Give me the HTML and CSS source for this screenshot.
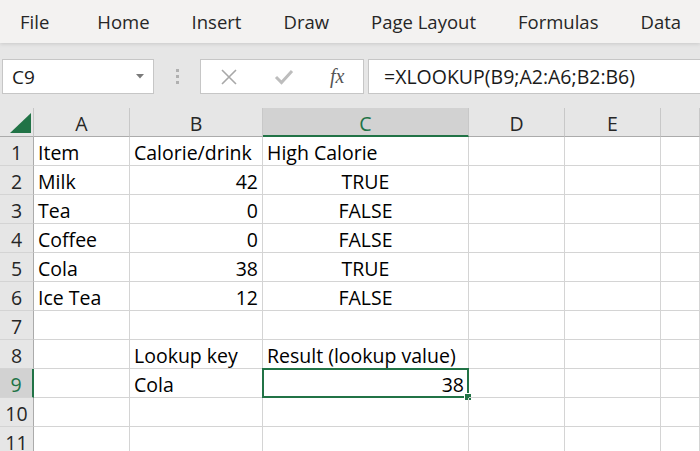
FILE: index.html
```html
<!DOCTYPE html>
<html>
<head>
<meta charset="utf-8">
<link rel="stylesheet" href="styles.css">
</head>
<body>
<div class="app">
  <nav class="menubar">
    <span class="first">File</span><span>Home</span><span>Insert</span><span>Draw</span><span>Page Layout</span><span>Formulas</span><span>Data</span>
  </nav>
  <div class="formulabar">
    <div class="namebox"><span>C9</span><svg class="caret" width="8" height="5" viewBox="0 0 8 5"><polygon points="0,0 8,0 4,4.5" fill="#7a7a7a"/></svg></div>
    <div class="dots"><i></i><i></i><i></i></div>
    <div class="fxbox">
      <svg class="ico" width="18" height="18" viewBox="0 0 18 18"><path d="M2 2 L16 16 M16 2 L2 16" stroke="#a8a8a8" stroke-width="1.6" fill="none"/></svg>
      <svg class="ico" width="20" height="18" viewBox="0 0 20 18"><path d="M2 9 L7.5 14.5 L18 3" stroke="#bdbdbd" stroke-width="3" fill="none"/></svg>
      <span class="fx">fx</span>
    </div>
    <div class="input"><span class="formula">=XLOOKUP(B9;A2:A6;B2:B6)</span></div>
  </div>
  <div class="sheet">
    <div class="corner"><svg width="34" height="29" viewBox="0 0 34 29"><polygon points="31,5 31,25 10,25" fill="#217346"/></svg></div>
    <div class="ch">A</div><div class="ch">B</div><div class="ch sel">C</div><div class="ch">D</div><div class="ch">E</div><div class="ch"></div>

    <div class="rh">1</div><div class="c">Item</div><div class="c">Calorie/drink</div><div class="c">High Calorie</div><div class="c"></div><div class="c"></div><div class="c"></div>
    <div class="rh">2</div><div class="c">Milk</div><div class="c num">42</div><div class="c mid">TRUE</div><div class="c"></div><div class="c"></div><div class="c"></div>
    <div class="rh">3</div><div class="c">Tea</div><div class="c num">0</div><div class="c mid">FALSE</div><div class="c"></div><div class="c"></div><div class="c"></div>
    <div class="rh">4</div><div class="c">Coffee</div><div class="c num">0</div><div class="c mid">FALSE</div><div class="c"></div><div class="c"></div><div class="c"></div>
    <div class="rh">5</div><div class="c">Cola</div><div class="c num">38</div><div class="c mid">TRUE</div><div class="c"></div><div class="c"></div><div class="c"></div>
    <div class="rh">6</div><div class="c">Ice Tea</div><div class="c num">12</div><div class="c mid">FALSE</div><div class="c"></div><div class="c"></div><div class="c"></div>
    <div class="rh">7</div><div class="c"></div><div class="c"></div><div class="c"></div><div class="c"></div><div class="c"></div><div class="c"></div>
    <div class="rh">8</div><div class="c"></div><div class="c">Lookup key</div><div class="c">Result (lookup value)</div><div class="c"></div><div class="c"></div><div class="c"></div>
    <div class="rh sel">9</div><div class="c"></div><div class="c">Cola</div><div class="c num active">38<span class="handle"></span></div><div class="c"></div><div class="c"></div><div class="c"></div>
    <div class="rh">10</div><div class="c"></div><div class="c"></div><div class="c"></div><div class="c"></div><div class="c"></div><div class="c"></div>
    <div class="rh">11</div><div class="c"></div><div class="c"></div><div class="c"></div><div class="c"></div><div class="c"></div><div class="c"></div>
  </div>
</div>
</body>
</html>
```

FILE: styles.css
```css
* { box-sizing: border-box; }
html, body { margin: 0; padding: 0; }
body {
  width: 700px;
  height: 451px;
  overflow: hidden;
  background: #ffffff;
  font-family: "Open Sans", "Noto Sans", sans-serif;
  color: #000;
}
.app { width: 700px; height: 451px; overflow: hidden; display: flex; flex-direction: column; }

.menubar {
  height: 43px;
  flex: none;
  background: #f3f2f1;
  display: flex;
  align-items: center;
  gap: 42px;
  padding-left: 20px;
  font-size: 18.5px;
  color: #262626;
  position: relative;
  z-index: 1;
  box-shadow: 0 1px 4px rgba(0,0,0,0.13);
  white-space: nowrap;
}
.menubar .first { margin-right: 6px; }

.formulabar {
  height: 65px;
  flex: none;
  background: #e6e6e6;
  display: flex;
  align-items: flex-start;
  padding-top: 16px;
  padding-left: 2px;
}
.namebox {
  width: 152px;
  height: 35px;
  background: #fff;
  border: 1px solid #c6c6c6;
  display: flex;
  align-items: center;
  justify-content: space-between;
  padding: 0 9px 0 9px;
  font-size: 19px;
  color: #1a1a1a;
}
.caret { margin-top: -1px; }
.dots {
  width: 46px;
  height: 35px;
  display: flex;
  flex-direction: column;
  align-items: center;
  justify-content: center;
  gap: 3px;
}
.dots i { display: block; width: 3px; height: 3px; background: #b0b0b0; }
.fxbox {
  width: 164px;
  height: 35px;
  background: #fff;
  border: 1px solid #c6c6c6;
  display: flex;
  align-items: center;
  padding-left: 19px;
  gap: 36px;
}
.fx {
  font-family: "Liberation Serif", "DejaVu Serif", serif;
  font-style: italic;
  font-size: 20px;
  color: #555;
}
.input {
  flex: 1;
  height: 35px;
  margin-left: 4px;
  background: #fff;
  border: 1px solid #c6c6c6;
  border-right: none;
  display: flex;
  align-items: center;
  padding-left: 15px;
  font-size: 19.5px;
  color: #1a1a1a;
  white-space: nowrap;
}

.sheet {
  flex: 1;
  display: grid;
  grid-template-columns: 34px 96px 133px 206px 96px 96px 1fr;
  grid-auto-rows: 29px;
  background: #fff;
  font-size: 19.5px;
}
.corner, .ch {
  background: #e6e6e6;
  border-bottom: 1px solid #ababab;
}
.corner { border-right: 1px solid #c6c6c6; }
.corner svg { display: block; }
.ch {
  border-right: 1px solid #c8c8c8;
  display: flex;
  align-items: flex-end;
  justify-content: center;
  line-height: 1;
  padding-bottom: 3px;
  color: #262626;
}
.ch.sel {
  background: #d2d2d2;
  border-bottom: 2px solid #217346;
  color: #217346;
  padding-bottom: 2px;
}
.rh {
  background: #e6e6e6;
  border-right: 1px solid #ababab;
  border-bottom: 1px solid #d4d4d4;
  display: flex;
  align-items: flex-end;
  justify-content: center;
  line-height: 1;
  padding-bottom: 3px;
  color: #262626;
}
.rh.sel {
  background: #d2d2d2;
  border-right: 2px solid #217346;
  color: #217346;
}
.c {
  border-right: 1px solid #d4d4d4;
  border-bottom: 1px solid #d4d4d4;
  display: flex;
  align-items: flex-end;
  line-height: 1;
  padding: 0 4px 3px 4px;
  white-space: nowrap;
  position: relative;
}
.c.num { justify-content: flex-end; }
.c.mid { justify-content: center; }
.c.active::before {
  content: "";
  position: absolute;
  left: -1px;
  top: -1px;
  right: -1px;
  bottom: -1px;
  border: 2px solid #217346;
}
.handle {
  position: absolute;
  right: -3px;
  bottom: -3px;
  width: 6px;
  height: 6px;
  background: #217346;
  outline: 1px solid #fff;
}
```
